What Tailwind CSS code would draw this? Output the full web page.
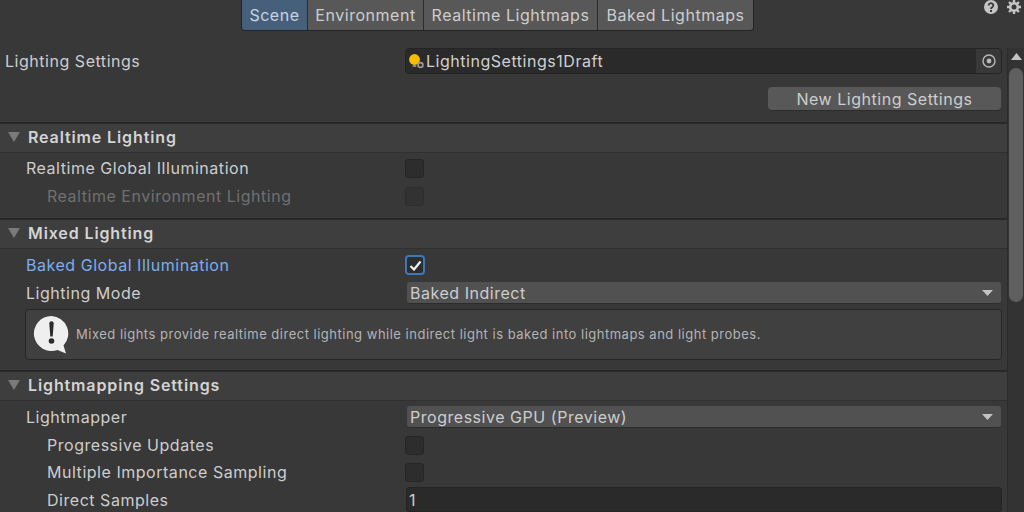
<!DOCTYPE html>
<html lang="en">
<head>
  <meta charset="UTF-8" />
  <title>Lighting</title>
  <script src="https://cdn.jsdelivr.net/npm/@tailwindcss/browser@4"></script>
</head>
<body class="w-[1024px] h-[512px] overflow-hidden bg-[#383838] text-[#cdcdcd] font-['Inter',sans-serif] text-[16px] tracking-[0.53px]">

  <!-- toolbar -->
  <div class="relative h-[43px] flex pl-[241px]">
    <div class="flex h-[32px] -mt-px rounded-b-[4px] overflow-hidden border border-[#242424] border-t-0">
      <div class="w-[66px] flex items-center justify-center bg-[#46607c] text-[#c6d3e0] border-r border-[#2c2c2c]">Scene</div>
      <div class="w-[116px] flex items-center justify-center bg-[#585858] border-r border-[#2c2c2c]">Environment</div>
      <div class="w-[174px] flex items-center justify-center bg-[#585858] border-r border-[#2c2c2c]">Realtime Lightmaps</div>
      <div class="w-[155px] flex items-center justify-center bg-[#585858]">Baked Lightmaps</div>
    </div>
    <!-- help + settings -->
    <div class="absolute right-[3px] top-0 flex gap-[9px]">
      <svg class="w-[14px] h-[14px]" viewBox="0 0 14 14"><circle cx="7" cy="7" r="7" fill="#c4c4c4"/><path d="M4.700 5.400a2.300 2.200 0 1 1 3.500 1.900c-.8.500-1.200.9-1.200 1.700" fill="none" stroke="#383838" stroke-width="1.800"/><rect x="6" y="10" width="2" height="2" fill="#383838"/></svg>
      <svg class="w-[14px] h-[14px]" viewBox="0 0 14 14"><circle cx="7" cy="7" r="3.800" fill="none" stroke="#c4c4c4" stroke-width="2.600"/><path d="M7 0v3M7 11v3M0 7h3M11 7h3M2 2l2.200 2.200M9.800 9.800L12 12M12 2L9.800 4.200M4.200 9.800L2 12" stroke="#c4c4c4" stroke-width="2.400"/></svg>
    </div>
  </div>

  <div class="flex">
    <!-- inspector -->
    <div class="w-[1007px] shrink-0">
      <div class="h-[36px] flex items-center pl-[5px] pr-[5px]">
        <div class="w-[400px] shrink-0 pb-[1px]">Lighting Settings</div>
        <div class="h-[26px] w-[597px] flex items-center bg-[#2a2a2a] border border-[#242424] rounded-[4px]">
          <svg class="w-[17px] h-[18px] ml-[3px] shrink-0" viewBox="0 0 17 18"><circle cx="5.500" cy="7.500" r="5.400" fill="#f7bd05"/><rect x="3.500" y="13" width="4" height="2" rx="1" fill="#8a8a8a"/><circle cx="11.500" cy="13" r="2.400" fill="none" stroke="#9a9a9a" stroke-width="1.700"/></svg>
          <span class="flex-1 text-[#d0d0d0]">LightingSettings1Draft</span>
          <div class="w-[25px] h-full flex items-center justify-center bg-[#383838] rounded-r-[3px]">
            <svg class="w-[14px] h-[14px]" viewBox="0 0 14 14"><circle cx="7" cy="7" r="6" fill="none" stroke="#b8b8b8" stroke-width="1.400"/><circle cx="7" cy="7" r="2.400" fill="#b8b8b8"/></svg>
          </div>
        </div>
      </div>

      <div class="h-[43px] flex justify-end items-start pt-[8px] pr-[6px]">
        <div class="w-[233px] h-[24px] flex items-center justify-center bg-[#585858] rounded-[4px] border-b border-[#2c2c2c]">New Lighting Settings</div>
      </div>

      <!-- Realtime Lighting -->
      <div class="h-[31px] pb-[2px] flex items-center bg-[#3e3e3e] border-t-2 border-b border-t-[#282828] border-b-[#303030]">
        <svg class="w-[12px] h-[10px] ml-[8px] mr-[8px]" viewBox="0 0 12 10"><path d="M0 0h12L6 10z" fill="#7a7a7a"/></svg>
        <span class="font-semibold tracking-[0.88px] text-[#d4d4d4]">Realtime Lighting</span>
      </div>
      <div class="h-[30px] flex items-center pl-[26px]">
        <span class="w-[379px] shrink-0">Realtime Global Illumination</span>
        <div class="w-[19px] h-[19px] bg-[#2d2d2d] border border-[#262626] rounded-[3px]"></div>
      </div>
      <div class="h-[28px] pb-[2px] flex items-center pl-[47px]">
        <span class="w-[358px] shrink-0 text-[#707070]">Realtime Environment Lighting</span>
        <div class="w-[19px] h-[19px] bg-[#323232] border border-[#2d2d2d] rounded-[3px]"></div>
      </div>

      <!-- Mixed Lighting -->
      <div class="h-[31px] mt-[7px] pb-[2px] flex items-center bg-[#3e3e3e] border-t-2 border-b border-t-[#282828] border-b-[#303030]">
        <svg class="w-[12px] h-[10px] ml-[8px] mr-[8px]" viewBox="0 0 12 10"><path d="M0 0h12L6 10z" fill="#7a7a7a"/></svg>
        <span class="font-semibold tracking-[0.88px] text-[#d4d4d4]">Mixed Lighting</span>
      </div>
      <div class="h-[30px] pt-[2px] mb-0 flex items-center pl-[26px]">
        <span class="w-[379px] shrink-0 text-[#7aaef0]">Baked Global Illumination</span>
        <div class="w-[20px] h-[20px] flex items-center justify-center bg-[#2d2d2d] border-2 border-[#3a79bb] rounded-[4px]">
          <svg class="w-[13px] h-[11px] shrink-0" viewBox="0 0 13 11"><path d="M1.500 6l3.500 3.500L11.500 1.500" fill="none" stroke="#f0f0f0" stroke-width="2.200"/></svg>
        </div>
      </div>
      <div class="h-[28px] flex items-center pl-[26px] pr-[6px]">
        <span class="w-[381px] shrink-0">Lighting Mode</span>
        <div class="flex-1 h-[22px] flex items-center justify-between pl-[3px] pr-[8px] bg-[#515151] rounded-[3px] border-b border-[#2c2c2c]">
          <span>Baked Indirect</span>
          <svg class="w-[11px] h-[6px]" viewBox="0 0 11 6"><path d="M0 0h11L5.500 6z" fill="#c4c4c4"/></svg>
        </div>
      </div>
      <div class="h-[51px] mt-[2px] ml-[25px] mr-[5px] flex items-center bg-[#404040] border border-[#262626] rounded-[4px] pl-[7px]">
        <svg class="w-[37px] h-[39px] shrink-0" viewBox="0 0 37 39"><path d="M18.500 1a17.500 17.500 0 1 0 6 33.900L33 38.500l-2.500-8A17.500 17.500 0 0 0 18.500 1z" fill="#efefef"/><path d="M16.300 8.500a2.200 2.200 0 0 1 4.400 0L19.700 21.500h-2.400z" fill="#2c2c2c"/><circle cx="18.500" cy="26" r="2.800" fill="#2c2c2c"/></svg>
        <span class="ml-[6px] text-[13px] tracking-[0.5px] text-[#b4b4b4]">Mixed lights provide realtime direct lighting while indirect light is baked into lightmaps and light probes.</span>
      </div>

      <!-- Lightmapping Settings -->
      <div class="h-[31px] mt-[10px] pb-[2px] flex items-center bg-[#3e3e3e] border-t-2 border-b border-t-[#282828] border-b-[#303030]">
        <svg class="w-[12px] h-[10px] ml-[8px] mr-[8px]" viewBox="0 0 12 10"><path d="M0 0h12L6 10z" fill="#7a7a7a"/></svg>
        <span class="font-semibold tracking-[0.88px] text-[#d4d4d4]">Lightmapping Settings</span>
      </div>
      <div class="h-[30px] pt-[2px] flex items-center pl-[26px] pr-[6px]">
        <span class="w-[381px] shrink-0">Lightmapper</span>
        <div class="flex-1 h-[22px] flex items-center justify-between pl-[3px] pr-[8px] bg-[#515151] rounded-[3px] border-b border-[#2c2c2c]">
          <span>Progressive GPU (Preview)</span>
          <svg class="w-[11px] h-[6px]" viewBox="0 0 11 6"><path d="M0 0h11L5.500 6z" fill="#c4c4c4"/></svg>
        </div>
      </div>
      <div class="h-[28px] flex items-center pl-[47px]">
        <span class="w-[358px] shrink-0">Progressive Updates</span>
        <div class="w-[19px] h-[19px] bg-[#2d2d2d] border border-[#262626] rounded-[3px]"></div>
      </div>
      <div class="h-[27px] pb-[1px] flex items-center pl-[47px]">
        <span class="w-[358px] shrink-0">Multiple Importance Sampling</span>
        <div class="w-[19px] h-[19px] bg-[#2d2d2d] border border-[#262626] rounded-[3px]"></div>
      </div>
      <div class="h-[28px] flex items-start pt-[1px] pl-[47px] pr-[5px]">
        <span class="w-[359px] shrink-0 mt-[1px]">Direct Samples</span>
        <div class="flex-1 h-[25px] flex items-center pl-[2px] bg-[#2a2a2a] border border-[#242424] rounded-[3px]">1</div>
      </div>
    </div>

    <!-- scrollbar -->
    <div class="flex-1 h-[469px] mt-[5px] flex flex-col items-center bg-[#333333] border-l border-[#2c2c2c]">
      <svg class="w-[11px] h-[7px] mt-[5px] shrink-0" viewBox="0 0 11 7"><path d="M0 7h11L5.500 0z" fill="#c4c4c4"/></svg>
      <div class="w-[14px] h-[234px] mt-[8px] rounded-[7px] bg-[#5f5f5f]"></div>
    </div>
  </div>
</body>
</html>
